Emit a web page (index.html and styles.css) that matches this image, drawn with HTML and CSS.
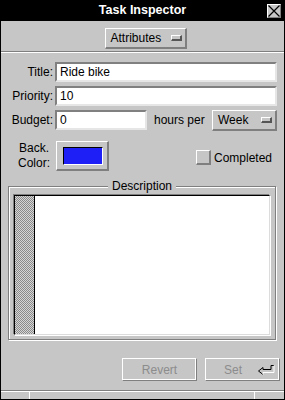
FILE: index.html
```html
<!DOCTYPE html>
<html>
<head>
<meta charset="utf-8">
<title>Task Inspector</title>
<link rel="stylesheet" href="styles.css">
</head>
<body>
<div class="window">
  <div class="titlebar">
    <span class="title">Task Inspector</span>
    <span class="close"><svg width="12" height="12" viewBox="0 0 12 12"><path d="M0.5 0.5 L11.5 11.5 M11.5 0.5 L0.5 11.5" stroke="#000" stroke-width="1.2" fill="none"/></svg></span>
  </div>
  <div class="toolbar">
    <div class="optbtn attr"><span>Attributes</span><span class="ind"></span></div>
  </div>
  <div class="sep"></div>
  <div class="form">
    <label class="lbl">Title:</label><div class="field">Ride bike</div>
    <label class="lbl">Priority:</label><div class="field">10</div>
    <label class="lbl">Budget:</label>
    <div class="budget">
      <div class="field short">0</div>
      <span class="per">hours per</span>
      <div class="optbtn week"><span>Week</span><span class="ind"></span></div>
    </div>
  </div>
  <div class="colorrow">
    <div class="lbl2">Back.<br>Color:</div>
    <div class="colorbtn"><div class="swatch"></div></div>
    <div class="check"><span class="box"></span><span>Completed</span></div>
  </div>
  <div class="group">
    <div class="legend">Description</div>
    <div class="textarea"><div class="gutter"></div><div class="text"></div></div>
  </div>
  <div class="actions">
    <div class="btn">Revert</div>
    <div class="btn set"><span>Set</span><svg width="17" height="10" viewBox="0 0 17 10"><path d="M5 9.5 L0.5 6 L5 2.5 L5 4.5 L13 4.5 L13 0.5 L16 0.5" stroke="#000" fill="none"/><path d="M16 0.5 L16 7.5 L5 7.5 L5 9.5" stroke="#fff" fill="none"/></svg></div>
  </div>
  <div class="status">
    <div class="cell c1"></div>
    <div class="cell c2"></div>
    <div class="cell c3"></div>
  </div>
</div>
</body>
</html>
```
FILE: styles.css
```css
* { box-sizing: border-box; }
html, body { margin: 0; padding: 0; }
body {
  width: 285px;
  height: 400px;
  font-family: "Liberation Sans", Arial, sans-serif;
  font-size: 12px;
  color: #000;
  background: #c6c6c6;
}
.window {
  width: 285px;
  height: 400px;
  border: 1px solid #000;
  border-top: none;
  background: #c6c6c6;
  display: flex;
  flex-direction: column;
}
.titlebar {
  height: 21px;
  background: #000;
  display: grid;
  grid-template-columns: 1fr auto 1fr;
  align-items: center;
  flex: none;
}
.title {
  grid-column: 2;
  color: #fff;
  font-weight: bold;
  font-size: 12.5px;
  line-height: 21px;
}
.close {
  grid-column: 3;
  justify-self: end;
  margin-right: 3px;
  width: 14px;
  height: 14px;
  background: #c6c6c6;
  border: 1px solid;
  border-color: #fff #7f7f7f #7f7f7f #fff;
  display: flex;
  align-items: center;
  justify-content: center;
}
.close svg { display: block; }
.toolbar {
  padding: 7px 0 2px 6px;
  display: flex;
  justify-content: center;
  flex: none;
}
.optbtn {
  display: flex;
  align-items: center;
  justify-content: space-between;
  background: #c6c6c6;
  border-style: solid;
  border-width: 1px 2px 2px 1px;
  border-color: #fff #7f7f7f #7f7f7f #fff;
  font-size: 12px;
}
.attr {
  width: 82px;
  height: 21px;
  padding: 0 3px 0 5px;
}
.ind {
  width: 11px;
  height: 6px;
  border-style: solid;
  border-width: 1px 2px 2px 1px;
  border-color: #fff #555 #555 #fff;
  background: #c6c6c6;
}
.sep {
  height: 2px;
  border-top: 1px solid #7f7f7f;
  border-bottom: 1px solid #fff;
  flex: none;
}
.form {
  padding: 9px 7px 0 0;
  display: grid;
  grid-template-columns: 52px 1fr;
  grid-auto-rows: 20px;
  row-gap: 4px;
  column-gap: 2px;
  align-items: center;
  flex: none;
}
.lbl { text-align: right; }
.field {
  height: 20px;
  background: #fff;
  border: 2px solid;
  border-color: #808080 #e6e6e6 #e6e6e6 #808080;
  padding: 0 3px;
  line-height: 16px;
}
.budget {
  display: flex;
  align-items: center;
  height: 20px;
}
.short { width: 92px; }
.per { margin-left: 7px; }
.week {
  margin-left: auto;
  width: 65px;
  height: 21px;
  padding: 0 3px 0 5px;
}
.colorrow {
  margin-top: 11px;
  padding: 0 12px 0 12px;
  display: flex;
  align-items: center;
  height: 30px;
  flex: none;
}
.lbl2 {
  width: 42px;
  text-align: center;
  line-height: 15px;
}
.colorbtn {
  margin-left: 1px;
  width: 53px;
  height: 30px;
  border-style: solid;
  border-width: 1px 2px 2px 1px;
  border-color: #fff #7f7f7f #7f7f7f #fff;
  display: flex;
  align-items: center;
  justify-content: center;
}
.swatch {
  width: 40px;
  height: 18px;
  background: #1e1ef6;
  border: 1px solid;
  border-color: #000 #fff #fff #000;
  margin-left: 1px;
  margin-top: 1px;
}
.check {
  margin-left: auto;
  display: flex;
  align-items: center;
  gap: 3px;
  margin-top: 3px;
}
.box {
  width: 15px;
  height: 15px;
  border-style: solid;
  border-width: 1px 2px 2px 1px;
  border-color: #fff #7f7f7f #7f7f7f #fff;
  background: #c6c6c6;
}
.group {
  margin: 15px 8px 0 7px;
  border: 1px solid #7f7f7f;
  box-shadow: inset 1px 1px 0 #fff, 1px 1px 0 #fff;
  padding: 0 5px 4px 5px;
  flex: none;
}
.legend {
  width: fit-content;
  margin: -8px auto 0;
  padding: 0 4px;
  background: #c6c6c6;
  line-height: 14px;
  font-size: 12px;
}
.textarea {
  margin-top: 2px;
  height: 140px;
  display: flex;
  border: 1px solid;
  border-color: #000 #dcdcdc #dcdcdc #000;
  box-shadow: -1px -1px 0 #7f7f7f, 1px 1px 0 #fff;
}
.gutter {
  width: 20px;
  border-right: 1px solid #000;
  background: repeating-conic-gradient(#8a8a8a 0 25%, #d6d6d6 0 50%) 0 0 / 2px 2px;
}
.text {
  flex: 1;
  background: #fff;
}
.actions {
  margin-top: 18px;
  padding-right: 4px;
  display: flex;
  justify-content: flex-end;
  gap: 8px;
  flex: none;
}
.btn {
  width: 75px;
  height: 23px;
  border: 1px solid;
  border-color: #fff #7f7f7f #7f7f7f #fff;
  box-shadow: inset -1px -1px 0 #fff;
  color: #8c8c8c;
  display: flex;
  align-items: center;
  justify-content: center;
}
.set {
  justify-content: space-between;
  padding: 0 4px 0 18px;
}
.set svg { display: block; }
.status {
  margin-top: auto;
  height: 9px;
  border-top: 1px solid #7f7f7f;
  display: flex;
  flex: none;
}
.cell {
  border-top: 1px solid #fff;
  background: #c6c6c6;
}
.c1 { width: 29px; border-right: 1px solid #fff; }
.c2 { flex: 1; border-right: 1px solid #fff; }
.c3 { width: 29px; }
```
